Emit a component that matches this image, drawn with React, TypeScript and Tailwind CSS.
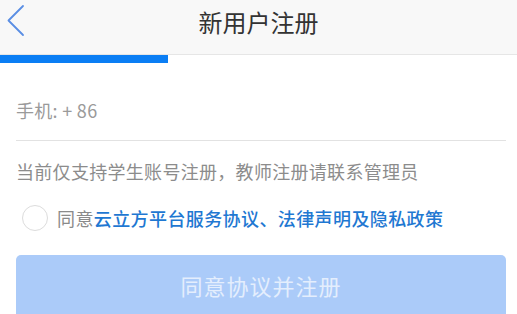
import React from "react";

const cjk = { fontFamily: '"Noto Sans CJK SC", "Noto Sans", sans-serif' };

function BackArrow() {
  return (
    <svg width="30" height="40" viewBox="0 0 30 40" fill="none" className="absolute left-0 top-0">
      <polyline
        points="23,6 8.5,20.5 23,35"
        stroke="#5a8ee4"
        strokeWidth="1.8"
        strokeLinecap="round"
        strokeLinejoin="round"
      />
    </svg>
  );
}

export default function App() {
  return (
    <div className="h-[314px] w-[517px] overflow-hidden bg-white" style={cjk}>
      <header className="relative flex h-[55px] items-center justify-center border-b border-[#e6e6e6] bg-[#f8f8f8]">
        <BackArrow />
        <h1 className="pb-[10px] text-[24px] leading-[30px] text-[#333]">新用户注册</h1>
      </header>
      <div className="h-[8px] w-[168px] bg-[#0b7ef4]" />

      <div className="pl-4 pr-[11px]">
        <div className="mt-[35px] border-b border-[#e2e2e2] pb-[18px] text-[18px] leading-[24px] tracking-[0.3px] text-[#9a9a9a]">
          手机: + 86
        </div>

        <p className="mt-[18px] text-[18px] leading-[24px] tracking-[0.3px] text-[#8c8c8c]">
          当前仅支持学生账号注册，教师注册请联系管理员
        </p>

        <div className="mt-[22px] flex h-[26px] items-center">
          <span className="ml-[6px] h-[26px] w-[26px] rounded-full border-[1.5px] border-[#dcdcdc] bg-white" />
          <span className="ml-[9px] text-[18px] leading-[24px] tracking-[0.4px] text-[#8a8a8a]">
            同意
            <span className="font-medium text-[#1f78d2]">云立方平台服务协议、法律声明及隐私政策</span>
          </span>
        </div>

        <button
          type="button"
          className="mt-[24px] flex h-[64px] w-full items-center justify-center rounded-[5px] bg-[#abcbf9] pb-[5px] text-[22px] leading-[28px] tracking-[1px] text-[#e4eefd]"
        >
          同意协议并注册
        </button>
      </div>
    </div>
  );
}
